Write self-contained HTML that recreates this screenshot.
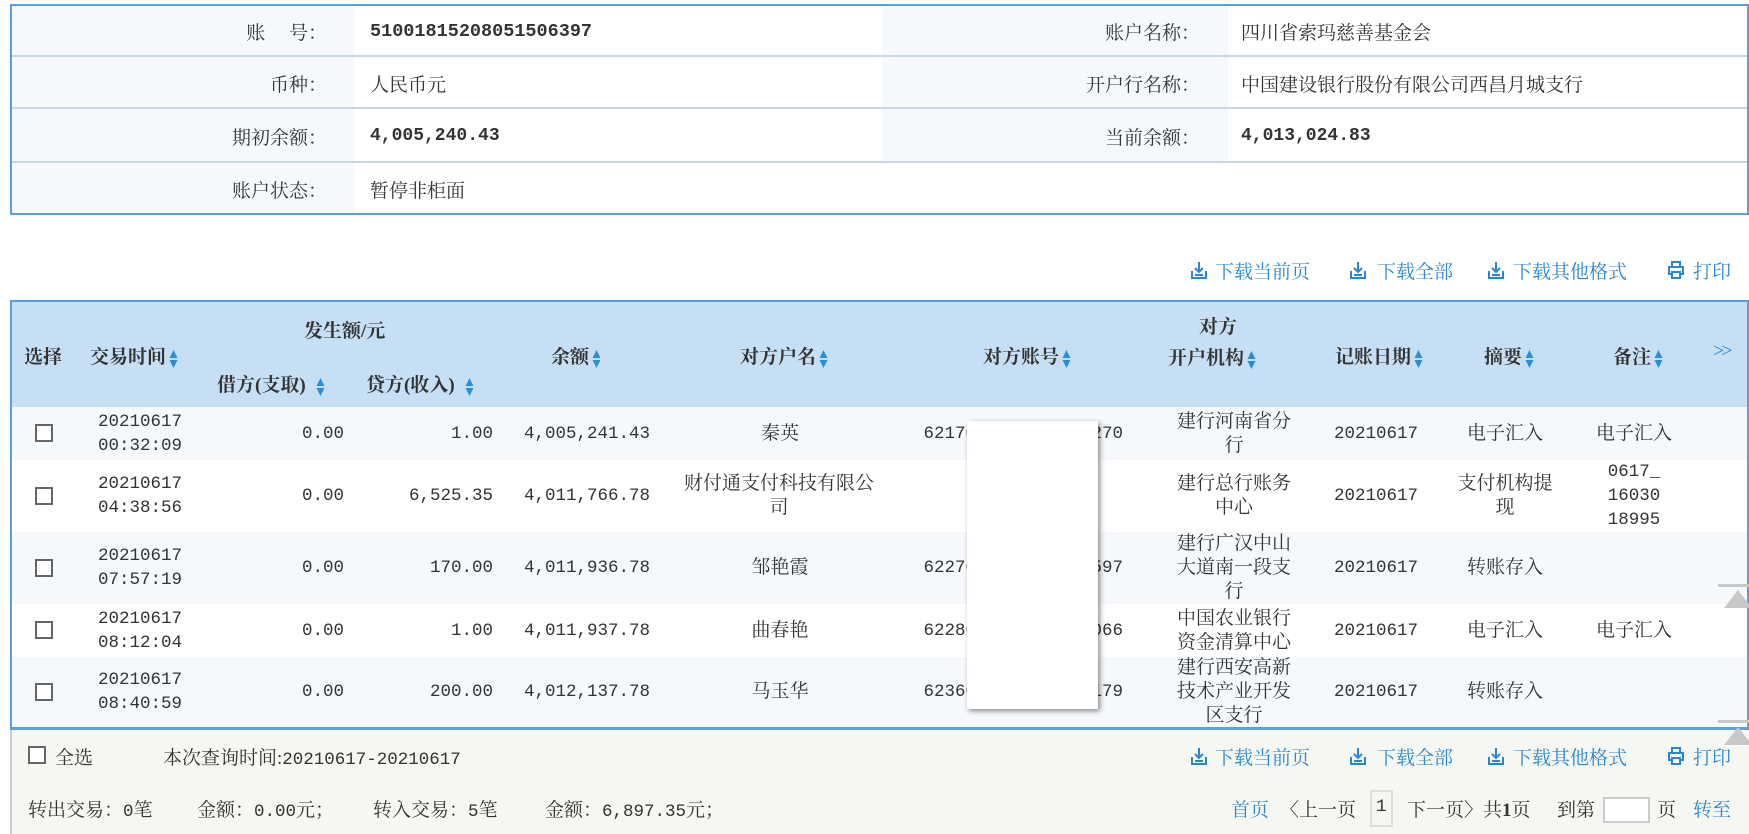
<!DOCTYPE html>
<html><head><meta charset="utf-8"><style>
*{margin:0;padding:0;box-sizing:border-box}
body{width:1749px;height:834px;position:relative;background:#fff;font-family:"Liberation Serif","Noto Serif CJK SC",serif;font-size:19px;color:#333;overflow:hidden}
.a{position:absolute;white-space:nowrap}
.n{font-family:"Liberation Mono","Noto Serif CJK SC",monospace;font-size:17.5px}
.b{font-weight:bold}
.c{position:absolute;display:flex;align-items:center;justify-content:center;text-align:center;line-height:24px;white-space:normal}
.r{justify-content:flex-end;text-align:right}
.lnk{color:#2a86cf}
.cb{position:absolute;width:18px;height:18px;border:2px solid #666;background:#fff}
.s{display:inline-block;width:9px;height:20px;vertical-align:middle;margin-left:3px}
.hd{font-weight:bold;color:#333}
</style></head><body>
<svg width="0" height="0" style="position:absolute"><defs>
<symbol id="so" viewBox="0 0 9 20"><path d="M4.5 1 L8.5 9 L0.5 9Z M0.5 11 L8.5 11 L4.5 19Z" fill="#2a8fd8"/></symbol>
<symbol id="dl" viewBox="0 0 16 18"><path d="M8 1 V11 M4 7 L8 11 L12 7" stroke="#2a86cf" stroke-width="2" fill="none"/><path d="M1 10 V17 H15 V10" stroke="#2a86cf" stroke-width="2" fill="none"/><path d="M4 14 H12" stroke="#2a86cf" stroke-width="2"/></symbol>
<symbol id="pr" viewBox="0 0 16 18"><rect x="4" y="1" width="8" height="5" fill="none" stroke="#2a86cf" stroke-width="2"/><rect x="1" y="6" width="14" height="7" fill="none" stroke="#2a86cf" stroke-width="2"/><rect x="4" y="11" width="8" height="6" fill="#fff" stroke="#2a86cf" stroke-width="2"/></symbol>
</defs></svg>

<!-- info table -->
<div style="position:absolute;left:10px;top:4px;width:1739px;height:211px;border:2px solid #5b9fdc;background:#fff"></div>
<div style="position:absolute;left:12px;top:6px;width:342px;height:207px;background:#f5f9fd"></div>
<div style="position:absolute;left:882px;top:6px;width:346px;height:156px;background:#f5f9fd"></div>
<div style="position:absolute;left:12px;top:55px;width:1735px;height:2px;background:#c5d8ea"></div>
<div style="position:absolute;left:12px;top:107px;width:1735px;height:2px;background:#c5d8ea"></div>
<div style="position:absolute;left:12px;top:161px;width:1735px;height:2px;background:#c5d8ea"></div>

<div class="a" style="right:1422px;top:18px">账&nbsp;&nbsp;&nbsp;&nbsp;&nbsp;号：</div>
<div class="a n b" style="left:370px;top:21px;font-size:18.5px">51001815208051506397</div>
<div class="a" style="right:1422px;top:70px">币种：</div>
<div class="a" style="left:370px;top:70px">人民币元</div>
<div class="a" style="right:1422px;top:123px">期初余额：</div>
<div class="a n b" style="left:370px;top:126px;font-size:18px">4,005,240.43</div>
<div class="a" style="right:1422px;top:176px">账户状态：</div>
<div class="a" style="left:370px;top:176px">暂停非柜面</div>
<div class="a" style="right:549px;top:18px">账户名称：</div>
<div class="a" style="left:1241px;top:18px">四川省索玛慈善基金会</div>
<div class="a" style="right:549px;top:70px">开户行名称：</div>
<div class="a" style="left:1241px;top:70px">中国建设银行股份有限公司西昌月城支行</div>
<div class="a" style="right:549px;top:123px">当前余额：</div>
<div class="a n b" style="left:1241px;top:126px;font-size:18px">4,013,024.83</div>

<!-- actions top -->
<svg class="a" style="left:1191px;top:261px" width="16" height="18"><use href="#dl"/></svg>
<div class="a lnk" style="left:1215px;top:257px">下载当前页</div>
<svg class="a" style="left:1350px;top:261px" width="16" height="18"><use href="#dl"/></svg>
<div class="a lnk" style="left:1377px;top:257px">下载全部</div>
<svg class="a" style="left:1488px;top:261px" width="16" height="18"><use href="#dl"/></svg>
<div class="a lnk" style="left:1513px;top:257px">下载其他格式</div>
<svg class="a" style="left:1668px;top:261px" width="16" height="18"><use href="#pr"/></svg>
<div class="a lnk" style="left:1693px;top:257px">打印</div>

<!-- table -->
<div style="position:absolute;left:10px;top:300px;width:1739px;height:430px;border:2px solid #5b9fdc;border-bottom:3px solid #5b9fdc;background:#fff"></div>
<div style="position:absolute;left:12px;top:302px;width:1735px;height:105px;background:#c7dff4"></div>
<div style="position:absolute;left:12px;top:407px;width:1735px;height:53px;background:#f5f9fc"></div>
<div style="position:absolute;left:12px;top:532px;width:1735px;height:72px;background:#f5f9fc"></div>
<div style="position:absolute;left:12px;top:657px;width:1735px;height:70px;background:#f5f9fc"></div>

<!-- header -->
<div class="a hd" style="left:24px;top:342px">选择</div>
<div class="a hd" style="left:90px;top:342px">交易时间<svg class="s" style="width:9px"><use href="#so"/></svg></div>
<div class="a hd" style="left:304px;top:316px">发生额/元</div>
<div class="a hd" style="left:217px;top:370px">借方(支取)<svg class="s" style="width:9px;margin-left:10px"><use href="#so"/></svg></div>
<div class="a hd" style="left:366px;top:370px">贷方(收入)<svg class="s" style="width:9px;margin-left:10px"><use href="#so"/></svg></div>
<div class="a hd" style="left:551px;top:342px">余额<svg class="s"><use href="#so"/></svg></div>
<div class="a hd" style="left:740px;top:342px">对方户名<svg class="s"><use href="#so"/></svg></div>
<div class="a hd" style="left:983px;top:342px">对方账号<svg class="s"><use href="#so"/></svg></div>
<div class="a hd" style="left:1199px;top:312px">对方</div>
<div class="a hd" style="left:1168px;top:343px">开户机构<svg class="s"><use href="#so"/></svg></div>
<div class="a hd" style="left:1335px;top:342px">记账日期<svg class="s"><use href="#so"/></svg></div>
<div class="a hd" style="left:1484px;top:342px">摘要<svg class="s"><use href="#so"/></svg></div>
<div class="a hd" style="left:1613px;top:342px">备注<svg class="s"><use href="#so"/></svg></div>
<div class="a lnk" style="left:1713px;top:340px;font-size:20px;letter-spacing:-3px">&gt;&gt;</div>

<!-- r1 407-460 -->
<div class="cb" style="left:35px;top:424px"></div>
<div class="c n" style="left:90px;top:407px;width:100px;height:53px">20210617<br>00:32:09</div>
<div class="c r n" style="left:190px;top:407px;width:154px;height:53px">0.00</div>
<div class="c r n" style="left:350px;top:407px;width:143px;height:53px">1.00</div>
<div class="c r n" style="left:500px;top:407px;width:150px;height:53px">4,005,241.43</div>
<div class="c" style="left:680px;top:407px;width:200px;height:53px">秦英</div>
<div class="c r n" style="left:900px;top:407px;width:223px;height:53px">6217000000000000270</div>
<div class="c" style="left:1170px;top:407px;width:128px;height:53px">建行河南省分行</div>
<div class="c n" style="left:1320px;top:407px;width:112px;height:53px">20210617</div>
<div class="c" style="left:1450px;top:407px;width:110px;height:53px">电子汇入</div>
<div class="c" style="left:1580px;top:407px;width:108px;height:53px">电子汇入</div>
<!-- r2 460-532 -->
<div class="cb" style="left:35px;top:487px"></div>
<div class="c n" style="left:90px;top:460px;width:100px;height:72px">20210617<br>04:38:56</div>
<div class="c r n" style="left:190px;top:460px;width:154px;height:72px">0.00</div>
<div class="c r n" style="left:350px;top:460px;width:143px;height:72px">6,525.35</div>
<div class="c r n" style="left:500px;top:460px;width:150px;height:72px">4,011,766.78</div>
<div class="c" style="left:675px;top:460px;width:208px;height:72px">财付通支付科技有限公司</div>
<div class="c" style="left:1170px;top:460px;width:128px;height:72px">建行总行账务中心</div>
<div class="c n" style="left:1320px;top:460px;width:112px;height:72px">20210617</div>
<div class="c" style="left:1452px;top:460px;width:106px;height:72px">支付机构提现</div>
<div class="c n" style="left:1600px;top:460px;width:68px;height:72px">0617_ 16030 18995</div>
<!-- r3 532-604 -->
<div class="cb" style="left:35px;top:559px"></div>
<div class="c n" style="left:90px;top:532px;width:100px;height:72px">20210617<br>07:57:19</div>
<div class="c r n" style="left:190px;top:532px;width:154px;height:72px">0.00</div>
<div class="c r n" style="left:350px;top:532px;width:143px;height:72px">170.00</div>
<div class="c r n" style="left:500px;top:532px;width:150px;height:72px">4,011,936.78</div>
<div class="c" style="left:680px;top:532px;width:200px;height:72px">邹艳霞</div>
<div class="c r n" style="left:900px;top:532px;width:223px;height:72px">6227000000000000597</div>
<div class="c" style="left:1170px;top:532px;width:128px;height:72px">建行广汉中山大道南一段支行</div>
<div class="c n" style="left:1320px;top:532px;width:112px;height:72px">20210617</div>
<div class="c" style="left:1450px;top:532px;width:110px;height:72px">转账存入</div>
<!-- r4 604-657 -->
<div class="cb" style="left:35px;top:621px"></div>
<div class="c n" style="left:90px;top:604px;width:100px;height:53px">20210617<br>08:12:04</div>
<div class="c r n" style="left:190px;top:604px;width:154px;height:53px">0.00</div>
<div class="c r n" style="left:350px;top:604px;width:143px;height:53px">1.00</div>
<div class="c r n" style="left:500px;top:604px;width:150px;height:53px">4,011,937.78</div>
<div class="c" style="left:680px;top:604px;width:200px;height:53px">曲春艳</div>
<div class="c r n" style="left:900px;top:604px;width:223px;height:53px">6228000000000000066</div>
<div class="c" style="left:1170px;top:604px;width:128px;height:53px">中国农业银行资金清算中心</div>
<div class="c n" style="left:1320px;top:604px;width:112px;height:53px">20210617</div>
<div class="c" style="left:1450px;top:604px;width:110px;height:53px">电子汇入</div>
<div class="c" style="left:1580px;top:604px;width:108px;height:53px">电子汇入</div>
<!-- r5 657-729 -->
<div class="cb" style="left:35px;top:683px"></div>
<div class="c n" style="left:90px;top:657px;width:100px;height:70px">20210617<br>08:40:59</div>
<div class="c r n" style="left:190px;top:657px;width:154px;height:70px">0.00</div>
<div class="c r n" style="left:350px;top:657px;width:143px;height:70px">200.00</div>
<div class="c r n" style="left:500px;top:657px;width:150px;height:70px">4,012,137.78</div>
<div class="c" style="left:680px;top:657px;width:200px;height:70px">马玉华</div>
<div class="c r n" style="left:900px;top:657px;width:223px;height:70px">6236000000000000179</div>
<div class="c" style="left:1170px;top:657px;width:128px;height:70px">建行西安高新技术产业开发区支行</div>
<div class="c n" style="left:1320px;top:657px;width:112px;height:70px">20210617</div>
<div class="c" style="left:1450px;top:657px;width:110px;height:70px">转账存入</div>

<!-- popup -->
<div style="position:absolute;left:967px;top:421px;width:131px;height:288px;background:#fff;box-shadow:2px 2px 5px rgba(0,0,0,.45)"></div>

<!-- scroll markers -->
<div style="position:absolute;left:1718px;top:584px;width:31px;height:3px;background:#c8c8c8"></div>
<div style="position:absolute;left:1724px;top:590px;width:0;height:0;border-left:14px solid transparent;border-right:14px solid transparent;border-bottom:18px solid #c8c8c8"></div>

<!-- footer -->
<div style="position:absolute;left:10px;top:730px;width:1739px;height:104px;background:#f5f7f3;border-left:2px solid #ccc"></div>
<div style="position:absolute;left:1718px;top:720px;width:31px;height:3px;background:#c8c8c8"></div>
<div style="position:absolute;left:1724px;top:727px;width:0;height:0;border-left:14px solid transparent;border-right:14px solid transparent;border-bottom:18px solid #c8c8c8"></div>

<div class="cb" style="left:28px;top:746px"></div>
<div class="a" style="left:55px;top:743px">全选</div>
<div class="a" style="left:163px;top:743px">本次查询时间:<span class="n">20210617-20210617</span></div>
<svg class="a" style="left:1191px;top:747px" width="16" height="18"><use href="#dl"/></svg>
<div class="a lnk" style="left:1215px;top:743px">下载当前页</div>
<svg class="a" style="left:1350px;top:747px" width="16" height="18"><use href="#dl"/></svg>
<div class="a lnk" style="left:1377px;top:743px">下载全部</div>
<svg class="a" style="left:1488px;top:747px" width="16" height="18"><use href="#dl"/></svg>
<div class="a lnk" style="left:1513px;top:743px">下载其他格式</div>
<svg class="a" style="left:1668px;top:747px" width="16" height="18"><use href="#pr"/></svg>
<div class="a lnk" style="left:1693px;top:743px">打印</div>

<div class="a" style="left:28px;top:795px">转出交易：<span class="n">0</span>笔</div>
<div class="a" style="left:197px;top:795px">金额：<span class="n">0.00</span>元；</div>
<div class="a" style="left:373px;top:795px">转入交易：<span class="n">5</span>笔</div>
<div class="a" style="left:545px;top:795px">金额：<span class="n">6,897.35</span>元；</div>

<div class="a lnk" style="left:1231px;top:795px">首页</div>
<div class="a" style="left:1280px;top:795px">〈上一页</div>
<div style="position:absolute;left:1370px;top:790px;width:23px;height:37px;border:2px solid #ddd;background:#f5f7f3"></div>
<div class="a n" style="left:1376px;top:797px">1</div>
<div class="a" style="left:1407px;top:795px">下一页〉共<b>1</b>页</div>
<div class="a" style="left:1557px;top:795px">到第</div>
<div style="position:absolute;left:1603px;top:797px;width:47px;height:26px;border:2px solid #ccc;background:#fff"></div>
<div class="a" style="left:1657px;top:795px">页</div>
<div class="a lnk" style="left:1693px;top:795px">转至</div>
</body></html>
